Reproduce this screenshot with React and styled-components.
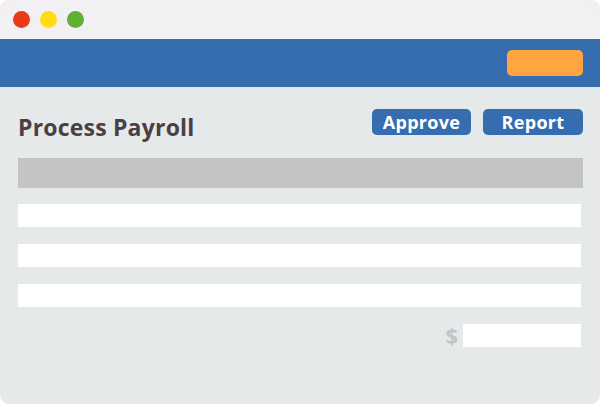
import React from 'react';
import styled, { createGlobalStyle } from 'styled-components';

const GlobalStyle = createGlobalStyle`
  html, body {
    margin: 0;
    padding: 0;
    background: #ffffff;
  }
  body {
    font-family: "Open Sans", "Liberation Sans", sans-serif;
  }
`;

const Window = styled.div`
  width: 600px;
  height: 404px;
  border-radius: 9px;
  overflow: hidden;
  background: #e6e9ea;
  display: flex;
  flex-direction: column;
`;

const TitleBar = styled.div`
  height: 39px;
  background: #f2f0f3;
  display: flex;
  align-items: center;
  gap: 10px;
  padding-left: 13px;
  box-sizing: border-box;
`;

const Dot = styled.span`
  width: 17px;
  height: 17px;
  border-radius: 50%;
  background: ${(p) => p.color};
`;

const Header = styled.div`
  height: 48px;
  background: #366db0;
  display: flex;
  justify-content: flex-end;
  padding: 11px 17px 0 0;
  box-sizing: border-box;
`;

const HeaderButton = styled.div`
  width: 76px;
  height: 26px;
  border-radius: 5px;
  background: #ffa641;
`;

const Content = styled.div`
  padding: 22px 17px 0 18px;
  display: flex;
  flex-direction: column;
`;

const TitleRow = styled.div`
  display: flex;
  justify-content: space-between;
  align-items: flex-start;
  height: 49px;
`;

const Title = styled.h1`
  margin: 0;
  margin-top: 2px;
  font-size: 23px;
  font-weight: 700;
  color: #4a4044;
  line-height: 32px;
  letter-spacing: 0.2px;
`;

const Actions = styled.div`
  display: flex;
  gap: 12px;
`;

const ActionButton = styled.button`
  width: ${(p) => p.width}px;
  height: 26px;
  border: none;
  border-radius: 5px;
  background: #366db0;
  color: #ffffff;
  font-family: "Open Sans", "Liberation Sans", sans-serif;
  font-size: 18px;
  font-weight: 700;
  letter-spacing: 0.3px;
  padding: 0;
  line-height: 26px;
`;

const HeaderBar = styled.div`
  height: 30px;
  background: #c4c4c4;
  margin-bottom: 16px;
`;

const Rows = styled.div`
  display: flex;
  flex-direction: column;
  gap: 17px;
  padding-right: 2px;
`;

const Row = styled.div`
  height: 23px;
  background: #ffffff;
`;

const TotalRow = styled.div`
  display: flex;
  justify-content: flex-end;
  align-items: center;
  gap: 5px;
`;

const Dollar = styled.span`
  color: #c4c4c4;
  font-size: 22px;
  font-weight: 700;
  line-height: 23px;
`;

const TotalInput = styled.div`
  width: 118px;
  height: 23px;
  background: #ffffff;
`;

const App = () => {
  return (
    <>
      <GlobalStyle />
      <Window>
        <TitleBar>
          <Dot color="#e93b16" />
          <Dot color="#ffdc14" />
          <Dot color="#60b033" />
        </TitleBar>
        <Header>
          <HeaderButton />
        </Header>
        <Content>
          <TitleRow>
            <Title>Process Payroll</Title>
            <Actions>
              <ActionButton width={99}>Approve</ActionButton>
              <ActionButton width={100}>Report</ActionButton>
            </Actions>
          </TitleRow>
          <HeaderBar />
          <Rows>
            <Row />
            <Row />
            <Row />
            <TotalRow>
              <Dollar>$</Dollar>
              <TotalInput />
            </TotalRow>
          </Rows>
        </Content>
      </Window>
    </>
  );
};

export default App;
